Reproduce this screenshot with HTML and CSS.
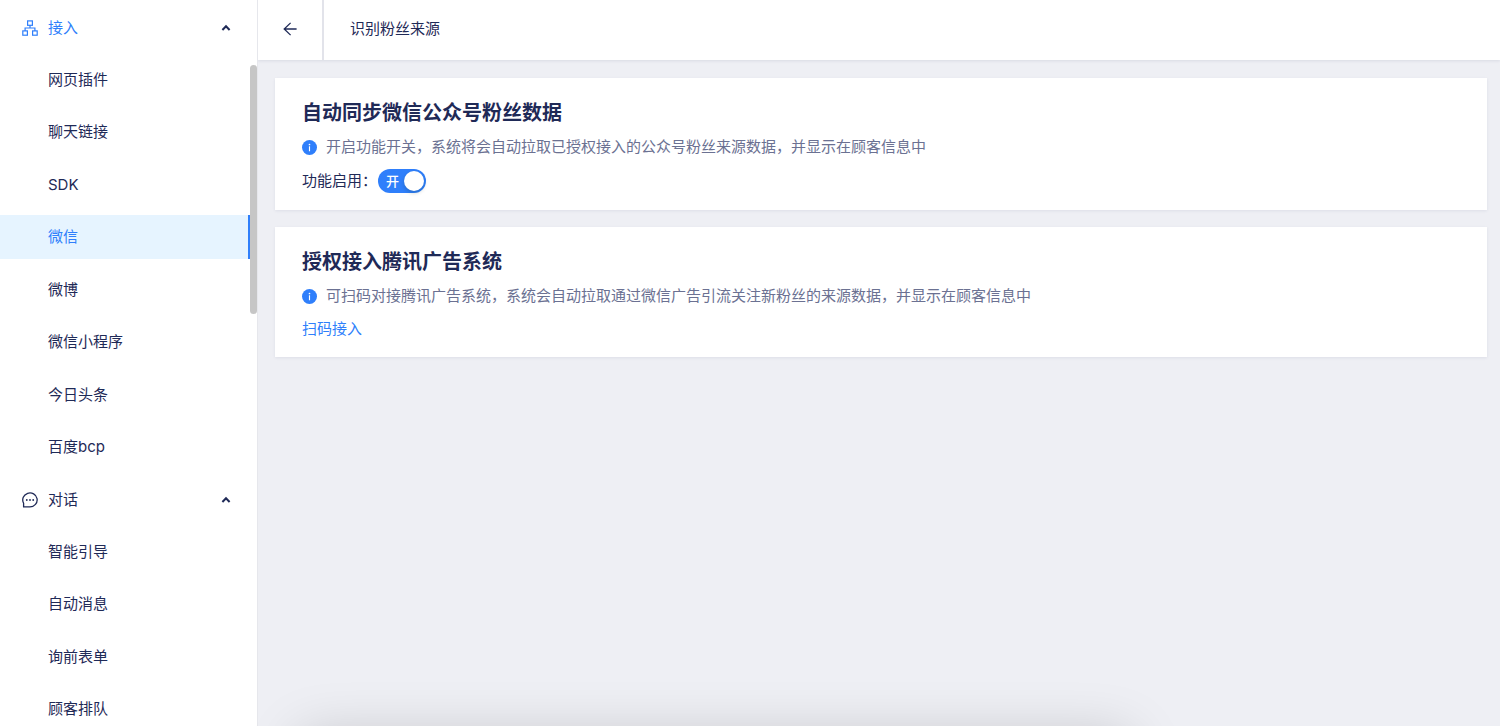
FILE: index.html
```
<!DOCTYPE html>
<html lang="zh-CN">

<head>
    <meta charset="UTF-8">
    <meta name="viewport" content="width=device-width, initial-scale=1.0">
    <title>识别粉丝来源</title>
    <link rel="stylesheet" href="styles.css">
</head>

<body>
    <div class="app">
        <nav class="sidebar">
            <div class="menu-group">
                <button type="button" class="menu-title open">
                    <svg class="menu-icon" viewBox="0 0 16 16" fill="none" stroke="currentColor" stroke-width="1.2">
                        <rect x="5.6" y="0.9" width="4.8" height="4.4" />
                        <rect x="0.8" y="10.9" width="4.6" height="4.3" />
                        <rect x="10.6" y="10.9" width="4.6" height="4.3" />
                        <path d="M8 5.3V8M3.1 10.9V8h9.8v2.9" />
                    </svg>
                    <span>接入</span>
                    <svg class="arrow" viewBox="0 0 10 10" fill="none" stroke="currentColor" stroke-width="2">
                        <path d="M1.4 7L5 3.2L8.6 7" />
                    </svg>
                </button>
                <ul class="menu-list">
                    <li><a href="#">网页插件</a></li>
                    <li><a href="#">聊天链接</a></li>
                    <li><a href="#">SDK</a></li>
                    <li><a href="#" class="active">微信</a></li>
                    <li><a href="#">微博</a></li>
                    <li><a href="#">微信小程序</a></li>
                    <li><a href="#">今日头条</a></li>
                    <li><a href="#">百度bcp</a></li>
                </ul>
            </div>
            <div class="menu-group">
                <button type="button" class="menu-title">
                    <svg class="menu-icon" viewBox="0 0 16 16" fill="none" stroke="currentColor" stroke-width="1.3">
                        <path d="M1.6 14.9V11.2A7.2 7 0 1 1 8 14.9Z" stroke-linejoin="round" />
                        <g fill="currentColor" stroke="none">
                            <circle cx="4.8" cy="8" r="0.9" />
                            <circle cx="8" cy="8" r="0.9" />
                            <circle cx="11.2" cy="8" r="0.9" />
                        </g>
                    </svg>
                    <span>对话</span>
                    <svg class="arrow" viewBox="0 0 10 10" fill="none" stroke="currentColor" stroke-width="2">
                        <path d="M1.4 7L5 3.2L8.6 7" />
                    </svg>
                </button>
                <ul class="menu-list">
                    <li><a href="#">智能引导</a></li>
                    <li><a href="#">自动消息</a></li>
                    <li><a href="#">询前表单</a></li>
                    <li><a href="#">顾客排队</a></li>
                </ul>
            </div>
            <div class="scroll-thumb"></div>
        </nav>

        <div class="main">
            <header class="topbar">
                <button type="button" class="back" aria-label="返回">
                    <svg viewBox="0 0 14 14" fill="none" stroke="currentColor" stroke-width="1.3">
                        <path d="M7.6 0.9L1.2 7L7.6 13.1M1.2 7H13.6" />
                    </svg>
                </button>
                <h1>识别粉丝来源</h1>
            </header>

            <main class="content">
                <section class="card">
                    <h2>自动同步微信公众号粉丝数据</h2>
                    <p class="tip">
                        <svg class="info" viewBox="0 0 16 16">
                            <circle cx="8" cy="8" r="8" fill="#2f7ffb" />
                            <circle cx="8" cy="4.8" r="0.9" fill="#fff" />
                            <rect x="7.4" y="6.7" width="1.2" height="5.3" fill="#fff" />
                        </svg>
                        <span>开启功能开关，系统将会自动拉取已授权接入的公众号粉丝来源数据，并显示在顾客信息中</span>
                    </p>
                    <div class="setting">
                        <label for="sync">功能启用：</label>
                        <span class="switch">
                            <input type="checkbox" id="sync" checked>
                            <span class="switch-text">开</span>
                        </span>
                    </div>
                </section>

                <section class="card">
                    <h2>授权接入腾讯广告系统</h2>
                    <p class="tip">
                        <svg class="info" viewBox="0 0 16 16">
                            <circle cx="8" cy="8" r="8" fill="#2f7ffb" />
                            <circle cx="8" cy="4.8" r="0.9" fill="#fff" />
                            <rect x="7.4" y="6.7" width="1.2" height="5.3" fill="#fff" />
                        </svg>
                        <span>可扫码对接腾讯广告系统，系统会自动拉取通过微信广告引流关注新粉丝的来源数据，并显示在顾客信息中</span>
                    </p>
                    <a href="#" class="link">扫码接入</a>
                </section>
            </main>
        </div>
    </div>
    <div class="bottom-shadow"></div>
</body>

</html>
```
FILE: styles.css
```
* {
    box-sizing: border-box;
}

body {
    margin: 0;
    font-family: Inter, "Noto Sans CJK SC", sans-serif;
    font-size: 15px;
    color: #1f2a57;
    background-color: #eeeff4;
    overflow: hidden;
}

button {
    padding: 0;
    border: none;
    background: none;
    font: inherit;
    color: inherit;
    cursor: pointer;
}

a {
    color: inherit;
    text-decoration: none;
}

.app {
    display: flex;
    height: 100vh;
}

/* sidebar */
.sidebar {
    position: relative;
    flex: none;
    width: 258px;
    padding: 6px 6px 0 0;
    background-color: #fff;
    border-right: 1px solid #e6e7ec;
    overflow: hidden;
}

.menu-title {
    display: flex;
    align-items: center;
    width: 100%;
    height: 44px;
    margin-bottom: 8px;
    padding: 0 20px 0 22px;
    line-height: 44px;
}

.menu-title.open > span,
.menu-title.open .menu-icon {
    color: #2f7ffb;
}

.menu-icon {
    width: 16px;
    height: 16px;
    margin-right: 10px;
}

.arrow {
    width: 10px;
    height: 10px;
    margin-left: auto;
}

.menu-list {
    margin: 0;
    padding: 0;
    list-style: none;
}

.menu-list li {
    margin-bottom: 8px;
}

.menu-list li:nth-child(even) {
    margin-bottom: 9px;
}

.menu-list a {
    display: block;
    padding-left: 48px;
    line-height: 44px;
}

.menu-list a.active {
    color: #2f7ffb;
    background-color: #e6f4ff;
    border-right: 3px solid #2f7ffb;
}

.scroll-thumb {
    position: absolute;
    top: 65px;
    right: 0;
    width: 7px;
    height: 249px;
    border-radius: 4px;
    background-color: #c6c6c6;
}

/* main */
.main {
    flex: 1;
    min-width: 0;
}

.topbar {
    display: flex;
    height: 60px;
    background-color: #fff;
    box-shadow: 0 1px 3px rgba(31, 42, 87, 0.1);
}

.back {
    display: flex;
    align-items: center;
    justify-content: center;
    width: 66px;
    padding-bottom: 3px;
    border-right: 2px solid #e2e3ea;
}

.back svg {
    width: 14px;
    height: 14px;
}

h1 {
    margin: 0;
    padding-left: 26px;
    font-size: 15px;
    font-weight: 400;
    line-height: 58px;
}

.content {
    display: flex;
    flex-direction: column;
    gap: 17px;
    padding: 18px 13px 18px 17px;
}

.card {
    padding: 19px 27px 13px;
    background-color: #fff;
    box-shadow: 0 1px 3px rgba(31, 42, 87, 0.08);
}

h2 {
    margin: 0;
    font-size: 20px;
    font-weight: 600;
    line-height: 32px;
}

.tip {
    display: flex;
    align-items: center;
    margin: 0;
    line-height: 36px;
    color: #6b7192;
}

.info {
    flex: none;
    width: 15px;
    height: 15px;
    margin-right: 9px;
}

.setting {
    display: flex;
    align-items: center;
    line-height: 32px;
}

.switch {
    position: relative;
    display: flex;
    margin-left: 1px;
}

.switch input {
    appearance: none;
    width: 48px;
    height: 24px;
    margin: 0;
    padding: 2px;
    border-radius: 12px;
    background-color: #bfc3d0;
    cursor: pointer;
}

.switch input::before {
    content: "";
    display: block;
    width: 20px;
    height: 20px;
    border-radius: 50%;
    background-color: #fff;
    box-shadow: 0 2px 4px rgba(0, 35, 11, 0.2);
}

.switch input:checked {
    background-color: #2f7ffb;
}

.switch input:checked::before {
    margin-left: auto;
}

.switch-text {
    position: absolute;
    top: 0;
    left: 8px;
    font-size: 13px;
    font-weight: 500;
    line-height: 24px;
    color: #fff;
    pointer-events: none;
}

.link {
    display: inline-block;
    line-height: 30px;
    color: #2f7ffb;
}

/* soft shadow along the bottom edge */
.bottom-shadow {
    position: fixed;
    bottom: -70px;
    left: 300px;
    right: 370px;
    height: 60px;
    box-shadow: 0 0 55px rgba(0, 0, 0, 0.18);
}
```
